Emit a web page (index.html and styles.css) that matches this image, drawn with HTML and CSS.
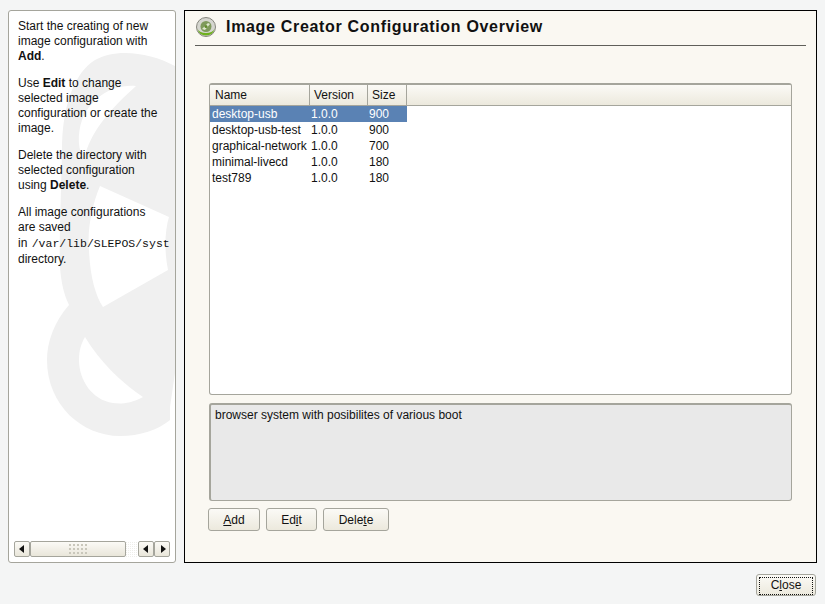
FILE: index.html
```html
<!DOCTYPE html>
<html lang="en">
<head>
  <meta charset="UTF-8" />
  <title>Image Creator Configuration Overview</title>
  <link rel="stylesheet" href="styles.css">
</head>
<body>
  <div class="main">
    <aside class="help">
      <svg class="watermark" width="166" height="551" viewBox="9 11 166 551">
        <path fill="#f0f0f0" d="M175 66 C150 52 115 48 95 60 C75 72 62 105 62 150 C61 200 59 240 60 267 C61 282 64 295 69 305 C54 322 47 342 47 360 C47 405 82 436 120 436 C140 436 158 430 170 420 L170 407 L175 373 Z"/>
        <path fill="#fff" d="M136 86 C110 84 90 100 82 120 C77 135 78 150 84 160 C88 140 100 118 136 86 Z"/>
        <path fill="#fff" d="M100 186 L169 217 C165 230 164 250 168 270 L103 307 C95 295 90 275 89 250 C87 230 92 205 100 186 Z"/>
        <path fill="#fff" d="M85 337 C100 362 122 383 143 397 C130 404 120 404 113 403 C92 400 79 380 79 360 C79 350 81 344 85 337 Z"/>
      </svg>
      <div class="help-text">
        <p>Start the creating of new image configuration with <b>Add</b>.</p>
        <p>Use <b>Edit</b> to change selected image configuration or create the image.</p>
        <p>Delete the directory with selected configuration using <b>Delete</b>.</p>
        <p>All image configurations are saved in&nbsp;<code>/var/lib/SLEPOS/syst</code> directory.</p>
      </div>
      <div class="scrollbar">
        <span class="arrow left"></span>
        <span class="thumb"><i class="grip"></i></span>
        <span class="track"></span>
        <span class="arrow left"></span>
        <span class="arrow right"></span>
      </div>
    </aside>
    <section class="content">
      <header class="title-row">
        <svg class="title-icon" width="20" height="20" viewBox="0 0 20 20">
          <circle cx="10" cy="10" r="9.500" fill="#d5d6cf" stroke="#85857c"/>
          <path d="M1.500 12 A8.800 8.800 0 0 0 18.500 12 A9 6 0 0 1 1.500 12 Z" fill="#6db01c"/>
          <circle cx="10" cy="9.500" r="5.500" fill="#7f9a5c"/>
          <path d="M6 12 L12 6 L14 7 L9 13 Z" fill="#dfe8cf"/>
          <circle cx="10" cy="9.500" r="1.500" fill="#5f8a2a"/>
        </svg>
        <h1>Image Creator Configuration Overview</h1>
      </header>
      <div class="table-box">
        <div class="thead">
          <span class="col-name">Name</span>
          <span class="col-version">Version</span>
          <span class="col-size">Size</span>
          <span class="col-rest"></span>
        </div>
        <div class="row selected"><span class="col-name">desktop-usb</span><span class="col-version">1.0.0</span><span class="col-size">900</span></div>
        <div class="row"><span class="col-name">desktop-usb-test</span><span class="col-version">1.0.0</span><span class="col-size">900</span></div>
        <div class="row"><span class="col-name">graphical-network</span><span class="col-version">1.0.0</span><span class="col-size">700</span></div>
        <div class="row"><span class="col-name">minimal-livecd</span><span class="col-version">1.0.0</span><span class="col-size">180</span></div>
        <div class="row"><span class="col-name">test789</span><span class="col-version">1.0.0</span><span class="col-size">180</span></div>
      </div>
      <div class="description">browser system with posibilites of various boot</div>
      <div class="actions">
        <button class="btn add"><u>A</u>dd</button>
        <button class="btn edit">Ed<u>i</u>t</button>
        <button class="btn delete">Dele<u>t</u>e</button>
      </div>
    </section>
  </div>
  <footer class="bottom">
    <button class="btn close"><span class="focus">C<u>l</u>ose</span></button>
  </footer>
</body>
</html>
```
FILE: styles.css
```css
html, body {
  height: 100%;
}
body {
  margin: 0;
  background: #f4f5f5;
  font-family: 'Liberation Sans', Arial, sans-serif;
  font-size: 12px;
  color: #111;
  display: flex;
  flex-direction: column;
  overflow: hidden;
}
.main {
  display: flex;
  gap: 8px;
  padding: 10px 8px 0 8px;
  height: 553px;
}
.help {
  position: relative;
  width: 168px;
  box-sizing: border-box;
  background: white;
  border: 1px solid #a5a59c;
  border-radius: 3px;
  padding: 8px 0 0 9px;
  display: flex;
  flex-direction: column;
  overflow: hidden;
}
.watermark {
  position: absolute;
  left: 0;
  top: 0;
}
.help-text {
  position: relative;
  flex: 1;
  width: 153px;
  overflow: hidden;
  line-height: 15px;
}
.help-text p {
  margin: 0 0 12px 0;
  width: 145px;
}
.help-text code {
  font-family: 'Liberation Mono', monospace;
  font-size: 11.500px;
  line-height: 17px;
  margin-left: 1px;
  white-space: nowrap;
}
.scrollbar {
  position: relative;
  display: flex;
  height: 16px;
  margin: 0 5px 5px -4px;
  width: 156px;
}
.arrow {
  width: 16px;
  box-sizing: border-box;
  border: 1px solid #a5a59c;
  border-radius: 2px;
  background: linear-gradient(#fbfaf6, #e9e6da);
  position: relative;
}
.arrow::after {
  content: "";
  position: absolute;
  top: 3px;
  left: 4px;
  border-style: solid;
  border-width: 4px 5px 4px 0;
  border-color: transparent #111 transparent transparent;
}
.arrow.right::after {
  border-width: 4px 0 4px 5px;
  border-color: transparent transparent transparent #111;
  left: 6px;
}
.thumb {
  width: 96px;
  box-sizing: border-box;
  border: 1px solid #a5a59c;
  border-radius: 2px;
  background: linear-gradient(#fbfaf6, #e9e6da);
  display: flex;
  align-items: center;
  justify-content: center;
}
.grip {
  width: 20px;
  height: 12px;
  background-image: radial-gradient(#c9c7bb 1px, transparent 1px);
  background-size: 4px 4px;
}
.track {
  width: 12px;
  background-image: linear-gradient(45deg, #eeeeea 25%, transparent 25%, transparent 75%, #eeeeea 75%);
  background-size: 2px 2px;
}
.content {
  width: 633px;
  box-sizing: border-box;
  background: #faf8f2;
  border: 1px solid black;
  padding: 0 10px 0 24px;
  display: flex;
  flex-direction: column;
}
.title-row {
  display: flex;
  align-items: center;
  gap: 10px;
  height: 34px;
  box-sizing: content-box;
  margin-left: -14px;
  padding-left: 1px;
  border-bottom: 1px solid #5f5f5a;
}
.title-icon {
  margin-bottom: 2px;
}
.title-row h1 {
  margin: 0 0 2px 0;
  font-family: 'Liberation Sans', sans-serif;
  font-size: 16px;
  font-weight: bold;
  letter-spacing: 0.680px;
  color: #111;
}
.table-box {
  margin-top: 37px;
  margin-right: 14px;
  height: 312px;
  box-sizing: border-box;
  background: white;
  border: 1px solid #a5a59c;
  border-top-width: 2px;
  border-radius: 3px;
  overflow: hidden;
}
.thead {
  display: flex;
  height: 20px;
  line-height: 20px;
  background: linear-gradient(#fbfaf6, #ece9dd);
  border-bottom: 1px solid #a5a59c;
}
.thead span {
  box-sizing: border-box;
  border-right: 1px solid #a5a59c;
  padding-left: 4px;
}
.thead .col-name {
  padding-left: 5px;
}
.thead .col-rest {
  flex: 1;
  border-right: none;
}
.col-name {
  width: 100px;
}
.col-version {
  width: 58px;
}
.col-size {
  width: 39px;
}
.row {
  display: flex;
  width: 197px;
  height: 16px;
  line-height: 16px;
}
.row span {
  padding-left: 1px;
  box-sizing: border-box;
  white-space: nowrap;
}
.row .col-name {
  padding-left: 2px;
}
.row.selected {
  background: #5a82b4;
  color: white;
}
.description {
  margin-top: 8px;
  margin-right: 14px;
  height: 98px;
  box-sizing: border-box;
  background: #e9e9e9;
  border: 1px solid #a5a59c;
  border-top-width: 2px;
  border-left-width: 2px;
  border-radius: 3px;
  padding: 3px 4px;
  line-height: 15px;
}
.actions {
  display: flex;
  gap: 6px;
  margin-top: 7px;
  margin-left: -1px;
}
.btn {
  height: 23px;
  padding: 0;
  box-sizing: border-box;
  background: linear-gradient(#fbfaf6, #ece9dd);
  border: 1px solid #a5a59c;
  border-radius: 3px;
  font-family: inherit;
  font-size: 12px;
  color: #111;
}
.btn.add {
  width: 52px;
}
.btn.edit {
  width: 51px;
}
.btn.delete {
  width: 66px;
}
.bottom {
  display: flex;
  justify-content: flex-end;
  padding: 11px 9px 0 0;
}
.btn.close {
  width: 60px;
  height: 22px;
  padding: 2px;
}
.focus {
  display: block;
  height: 16px;
  line-height: 15px;
  border: 1px dotted #111;
}
```
